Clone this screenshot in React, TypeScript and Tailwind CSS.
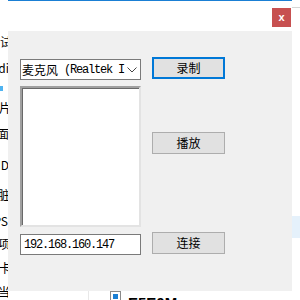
import React from 'react';

const cjk = { fontFamily: '"Noto Sans CJK SC", "Liberation Sans", sans-serif' };
const mono = { fontFamily: '"Liberation Mono", "Noto Sans CJK SC", monospace' };

// bits of the desktop behind the dialog (cut by the window edge)
const sideRows: { text?: string; mt: string; shift: string }[] = [
  { text: '测试', mt: 'mt-[34px]', shift: 'mr-[-4px]' },
  { text: 'Audi', mt: 'mt-[10px]', shift: 'mr-[-1px]' },
  { mt: 'mt-[7px]', shift: '' },
  { text: '图片', mt: 'mt-[6px]', shift: 'mr-[-3px]' },
  { text: '界面', mt: 'mt-[10px]', shift: 'mr-[-1px]' },
  { text: 'ID', mt: 'mt-[15px]', shift: 'mr-[-1px]' },
  { text: '内脏', mt: 'mt-[14px]', shift: 'mr-[-2px]' },
  { text: 'GPS', mt: 'mt-[10px]', shift: 'mr-[0px]' },
  { text: '选项', mt: 'mt-[7px]', shift: 'mr-[-2px]' },
  { text: '显卡', mt: 'mt-[8px]', shift: 'mr-[-3px]' },
  { text: '相当', mt: 'mt-[8px]', shift: 'mr-[-2px]' },
];

const Button: React.FC<{ label: string; focused?: boolean; className?: string }> = ({ label, focused, className }) => (
  <div
    className={`w-[73px] h-[22px] flex items-center justify-center bg-[#e1e1e1] text-[12px] text-black ${
      focused ? 'border-2 border-[#0078d7]' : 'border border-[#adadad]'
    } ${className ?? ''}`}
    style={cjk}
  >
    {label}
  </div>
);

const App: React.FC = () => {
  return (
    <div className="w-[300px] h-[300px] bg-white flex overflow-hidden" style={cjk}>
      {/* left desktop strip */}
      <div className="w-[8px] shrink-0 overflow-hidden flex flex-col">
        {sideRows.map((r, i) => (
          <div key={i} className={`h-[16px] flex justify-end items-center ${r.mt}`}>
            {r.text ? (
              <span className={`whitespace-nowrap text-[12px] leading-[16px] text-black ${r.shift}`}>{r.text}</span>
            ) : (
              <span className="w-[3px] h-[5px] bg-[#4fb3f0] mr-[5px]" />
            )}
          </div>
        ))}
      </div>

      {/* dialog */}
      <div className="w-[284px] shrink-0 flex flex-col">
        <div className="h-px bg-[#1a7fd4]" />
        <div className="h-[30px] bg-white flex justify-end items-start pt-[7px] pr-px">
          <div className="w-[19px] h-[19px] bg-[#c75050] flex items-center justify-center">
            <span className="text-white text-[11px] font-bold leading-none" style={{ fontFamily: '"Liberation Sans", sans-serif' }}>
              x
            </span>
          </div>
        </div>
        <div className="h-[260px] bg-[#f0f0f0] flex pl-[12px]">
          <div className="w-[121px] flex flex-col pt-[28px]">
            {/* combo */}
            <div className="h-[21px] bg-white border border-[#7a7a7a] flex items-center pl-px pr-[3px]">
              <span className="flex-1 whitespace-nowrap overflow-hidden text-[12px] text-black leading-none flex items-center">
                <span style={cjk}>麦克风</span>
                <span className="tracking-[-1.2px]" style={mono}>&nbsp;(Realtek I</span>
              </span>
              <svg width="10" height="6" viewBox="0 0 10 6" className="shrink-0 ml-[2px]">
                <polyline points="0.5,0.5 5,5 9.5,0.5" fill="none" stroke="#444" strokeWidth="1" />
              </svg>
            </div>
            {/* list */}
            <div className="mt-[6px] h-[141px] bg-white border-2 border-t-[#a0a0a0] border-l-[#a0a0a0] border-r-[#e3e3e3] border-b-[#e3e3e3] shadow-[inset_1px_1px_0_#696969]" />
            {/* ip edit */}
            <div className="mt-[7px] h-[21px] bg-white border border-[#7a7a7a] flex items-center pl-[3px]">
              <span className="text-[12px] text-black tracking-[-1.2px] leading-none" style={mono}>
                192.168.160.147
              </span>
            </div>
          </div>
          <div className="ml-[11px] flex flex-col pt-[26px]">
            <Button label="录制" focused />
            <Button label="播放" className="mt-[53px]" />
            <Button label="连接" className="mt-[78px]" />
          </div>
        </div>
        {/* desktop below the dialog */}
        <div className="h-[9px] flex items-start overflow-hidden">
          <div className="ml-[80px] w-px h-full bg-[#e8e8e8]" />
          <div className="ml-[21px] w-[11px] h-[14px] border border-[#8a8a8a] flex justify-center pt-[2px]">
            <div className="w-[5px] h-[5px] bg-[#1a7fd4]" />
          </div>
          <span className="ml-[7px] mt-[4px] text-[15px] font-bold leading-[16px] text-black" style={{ fontFamily: '"Liberation Sans", sans-serif' }}>
            E5E0Mar
          </span>
        </div>
      </div>

      {/* right desktop strip */}
      <div className="w-[8px] shrink-0 flex flex-col">
        <div className="mt-[7px] h-px bg-[#d6d6d6]" />
        <div className="mt-[208px] h-[22px] bg-[#e5f1fb]" />
      </div>
    </div>
  );
};

export default App;
